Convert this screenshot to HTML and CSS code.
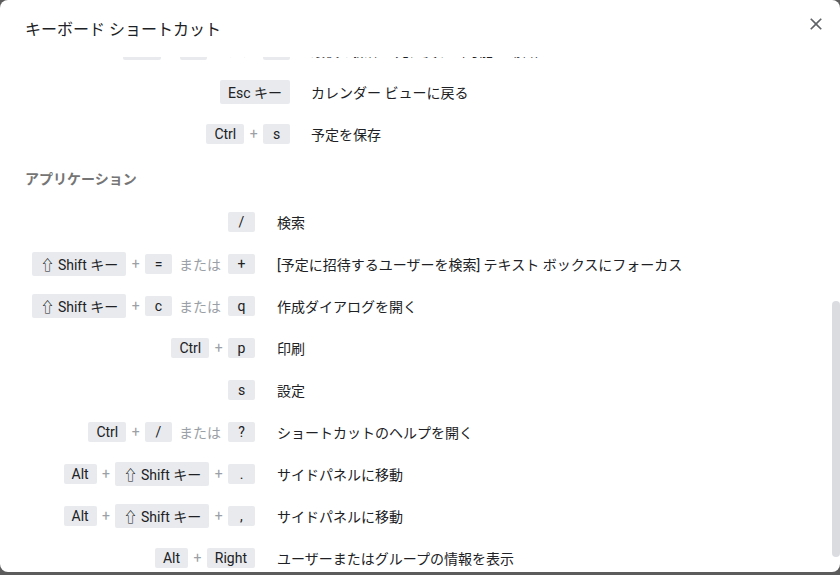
FILE: index.html
```html
<!DOCTYPE html>
<html lang="ja">
<head>
<meta charset="utf-8">
<title>キーボード ショートカット</title>
<link rel="stylesheet" href="styles.css">
</head>
<body>
<div class="dialog">
  <div class="header">
    <h1 class="title">キーボード ショートカット</h1>
    <button class="close" aria-label="閉じる">
      <svg viewBox="0 0 24 24" width="20" height="20"><path d="M19 6.41L17.59 5 12 10.59 6.41 5 5 6.41 10.59 12 5 17.59 6.41 19 12 13.41 17.59 19 19 17.59 13.41 12z" fill="#5f6368"/></svg>
    </button>
  </div>
  <div class="scroll">
    <div class="content">
      <section class="sec">
        <h2 class="sec-title">ナビゲーション</h2>
        <div class="grid grid-nav">
          <div class="keys"><span class="k">k</span><span class="or">または</span><span class="k">p</span></div><div class="desc">前の期間</div>
          <div class="keys"><span class="k">j</span><span class="or">または</span><span class="k">n</span></div><div class="desc">次の期間</div>
          <div class="keys"><span class="k">t</span></div><div class="desc">今日に移動</div>
          <div class="keys"><span class="k">g</span></div><div class="desc">日付に移動</div>
          <div class="keys"><span class="k">r</span></div><div class="desc">更新</div>
          <div class="keys"><span class="k">d</span><span class="or">または</span><span class="k">1</span></div><div class="desc">日表示</div>
        </div>
      </section>
      <section class="sec">
        <h2 class="sec-title">予定の操作</h2>
        <div class="grid grid-ev">
          <div class="keys"><span class="k">c</span></div><div class="desc">予定を作成</div>
          <div class="keys"><span class="k">e</span></div><div class="desc">予定の詳細を表示</div>
          <div class="keys"><span class="k">Backspace</span><span class="or">または</span><span class="k">Delete</span></div><div class="desc">予定を削除</div>
          <div class="keys"><span class="k">Ctrl</span><span class="plus">+</span><span class="k">z</span><span class="or">または</span><span class="k">z</span></div><div class="desc">最後の操作を元に戻す（可能な場合）</div>
          <div class="keys"><span class="k">Esc キー</span></div><div class="desc">カレンダー ビューに戻る</div>
          <div class="keys"><span class="k">Ctrl</span><span class="plus">+</span><span class="k">s</span></div><div class="desc">予定を保存</div>
        </div>
      </section>
      <section class="sec">
        <h2 class="sec-title">アプリケーション</h2>
        <div class="grid grid-app">
          <div class="keys"><span class="k">/</span></div><div class="desc">検索</div>
          <div class="keys"><span class="k">⇧ Shift キー</span><span class="plus">+</span><span class="k">=</span><span class="or">または</span><span class="k">+</span></div><div class="desc">[予定に招待するユーザーを検索] テキスト ボックスにフォーカス</div>
          <div class="keys"><span class="k">⇧ Shift キー</span><span class="plus">+</span><span class="k">c</span><span class="or">または</span><span class="k">q</span></div><div class="desc">作成ダイアログを開く</div>
          <div class="keys"><span class="k">Ctrl</span><span class="plus">+</span><span class="k">p</span></div><div class="desc">印刷</div>
          <div class="keys"><span class="k">s</span></div><div class="desc">設定</div>
          <div class="keys"><span class="k">Ctrl</span><span class="plus">+</span><span class="k">/</span><span class="or">または</span><span class="k">?</span></div><div class="desc">ショートカットのヘルプを開く</div>
          <div class="keys"><span class="k">Alt</span><span class="plus">+</span><span class="k">⇧ Shift キー</span><span class="plus">+</span><span class="k">.</span></div><div class="desc">サイドパネルに移動</div>
          <div class="keys"><span class="k">Alt</span><span class="plus">+</span><span class="k">⇧ Shift キー</span><span class="plus">+</span><span class="k">,</span></div><div class="desc">サイドパネルに移動</div>
          <div class="keys"><span class="k">Alt</span><span class="plus">+</span><span class="k">Right</span></div><div class="desc">ユーザーまたはグループの情報を表示</div>
        </div>
      </section>
    </div>
  </div>
  <div class="thumb"></div>
</div>
<script src="script.js"></script>
</body>
</html>
```

FILE: styles.css
```css
* { box-sizing: border-box; }
html, body {
  margin: 0;
  padding: 0;
  background: #5c5c5c;
  font-family: Roboto, "Noto Sans CJK JP", sans-serif;
  color: #202124;
}
.dialog {
  position: relative;
  width: 840px;
  height: 572px;
  background: #fff;
  border-radius: 8px;
  overflow: hidden;
  display: flex;
  flex-direction: column;
}
.header {
  height: 57px;
  flex: none;
  display: flex;
  align-items: center;
  justify-content: space-between;
  padding: 0 14px 0 25px;
}
.title {
  margin: 0;
  margin-top: -1px;
  font-size: 16px;
  font-weight: 400;
  color: #202124;
}
.close {
  border: 0;
  background: none;
  padding: 0;
  width: 20px;
  height: 20px;
  display: flex;
  margin-top: -9px;
}
.scroll {
  flex: 1;
  overflow: hidden;
}
.thumb {
  position: absolute;
  right: 0;
  top: 301px;
  width: 8px;
  height: 256px;
  background: #dadce0;
  border-radius: 4px;
}
.content {
  padding: 0 0 0 25px;
}
.sec-title {
  margin: 0;
  height: 46px;
  display: flex;
  align-items: center;
  font-size: 14px;
  font-weight: 700;
  color: #757575;
}
.grid {
  display: grid;
  grid-auto-rows: 42px;
  align-items: center;
  font-size: 14px;
}
.grid-nav, .grid-ev { grid-template-columns: 265px 1fr; column-gap: 21px; }
.grid-app { grid-template-columns: 230px 1fr; column-gap: 22px; }
.keys {
  display: flex;
  justify-content: flex-end;
  align-items: center;
}
.k {
  display: inline-block;
  background: #e8eaed;
  color: #202124;
  border-radius: 2px;
  padding: 2px 8px;
  min-width: 27px;
  text-align: center;
  white-space: nowrap;
  line-height: normal;
}
.plus {
  color: #9aa0a6;
  margin: 0 5.4px;
}
.or {
  color: #9aa0a6;
  margin: 0 7px;
}
.desc {
  color: #202124;
  white-space: nowrap;
}
```

FILE: script.js
```js
var s = document.querySelector('.scroll');
s.scrollTop = s.scrollHeight - s.clientHeight - 7;
```
